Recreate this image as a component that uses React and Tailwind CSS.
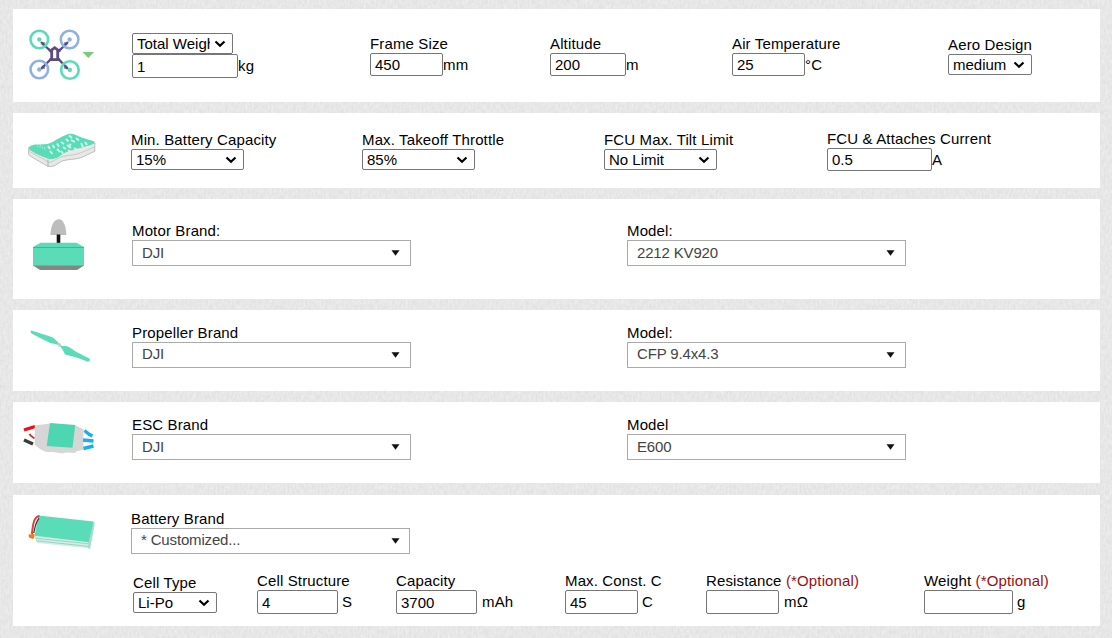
import React from "react";

const FONT = "font-['Liberation_Sans',Arial,sans-serif]";

function Texture() {
  return (
    <svg className="absolute inset-0 h-full w-full" aria-hidden="true">
      <filter id="weave-v" x="0" y="0" width="100%" height="100%">
        <feTurbulence type="fractalNoise" baseFrequency="0.5 0.2" numOctaves="2" seed="4" />
        <feColorMatrix values="0 0 0 0 0.93  0 0 0 0 0.93  0 0 0 0 0.93  1 0 0 0 -0.25" />
      </filter>
      <filter id="weave-h" x="0" y="0" width="100%" height="100%">
        <feTurbulence type="fractalNoise" baseFrequency="0.2 0.5" numOctaves="2" seed="9" />
        <feColorMatrix values="0 0 0 0 0.55  0 0 0 0 0.55  0 0 0 0 0.55  0.2 0 0 0 -0.07" />
      </filter>
      <rect width="100%" height="100%" filter="url(#weave-v)" />
      <rect width="100%" height="100%" filter="url(#weave-h)" />
    </svg>
  );
}

function Label({ children }) {
  return (
    <span className="block h-[17px] text-[15px] leading-[17px] tracking-[0.14px] whitespace-nowrap">{children}</span>
  );
}

function Text({ size, value, unit, gap = "" }) {
  return (
    <span className="flex items-center">
      <input
        aria-label="value"
        defaultValue={value}
        className={`${size} box-border rounded-[2px] border border-[#767676] bg-white px-1 text-[15px] leading-[17px] text-black outline-none`}
      />
      {unit && <span className={`${gap} text-[15px] leading-[17px] tracking-[0.14px]`}>{unit}</span>}
    </span>
  );
}

function Select({ size, value }) {
  return (
    <span className={`${size} flex h-[21px] items-center justify-between rounded-[2px] border border-[#767676] bg-white pr-[6px] pl-1`}>
      <span className="min-w-0 overflow-hidden text-[15px] leading-[18px] whitespace-nowrap">{value}</span>
      <svg width="12" height="8" viewBox="0 0 12 8" className="ml-1 shrink-0" fill="none">
        <path d="M1.5 1.5 6 5.7 10.5 1.5" stroke="#000" strokeWidth="2.2" />
      </svg>
    </span>
  );
}

function Combo({ value, lift = "pb-px", arrow = "pr-[10px]" }) {
  return (
    <span className={`${arrow} flex h-[26px] w-[279px] items-center justify-between border border-[#aaa] bg-white pl-[9px]`}>
      <span className={`${lift} text-[15px] leading-[17px] tracking-[-0.16px] whitespace-nowrap text-[#444]`}>{value}</span>
      <svg width="9" height="6" viewBox="0 0 9 6">
        <path d="M.5.3h8L4.5 5.8Z" fill="#111" />
      </svg>
    </span>
  );
}

function Field({ label, className = "", children }) {
  return (
    <div className={className}>
      <Label>{label}</Label>
      <div className="pt-px">{children}</div>
    </div>
  );
}

const Optional = () => <span className="text-[#990f0f]">(*Optional)</span>;

function Drone() {
  return (
    <svg width="68" height="54" viewBox="0 0 68 54" fill="none">
      <path d="M14 14 24.5 24M41 14 31 24M14 41 24.5 30.5M41 41 31 30.5" stroke="#5c4a80" strokeWidth="2.4" />
      <path d="m15 17 2.500-2.500M37.500 14.500 40 17M15 38l2.500 2.500M37.500 40.500 40 38" stroke="#5c4a80" strokeWidth="1.600" />
      <path d="M24.700 33V22l3-2.300 3 2.300v11M22.500 31.700H33" stroke="#5c4a80" strokeWidth="2.800" />
      <path d="M22.500 20.500v3M33 20.500v3" stroke="#5c4a80" strokeWidth="1.200" />
      <g strokeWidth="2.600">
        <circle cx="12.300" cy="11.500" r="8.800" stroke="#5bdcb8" />
        <circle cx="42.600" cy="11.500" r="8.800" stroke="#8eb1e5" />
        <circle cx="12.300" cy="41.500" r="8.800" stroke="#8eb1e5" />
        <circle cx="42.900" cy="42" r="8.800" stroke="#5bdcb8" />
      </g>
      <circle cx="12.300" cy="11.500" r="2.200" fill="#5bdcb8" />
      <circle cx="42.600" cy="11.500" r="2.200" fill="#8eb1e5" />
      <circle cx="12.300" cy="41.500" r="2.200" fill="#8eb1e5" />
      <circle cx="42.900" cy="42" r="2.200" fill="#5bdcb8" />
      <path d="M55.500 24H67l-5.700 6Z" fill="#78cc78" />
    </svg>
  );
}

function Controller() {
  return (
    <svg width="70" height="36" viewBox="0 0 70 36">
      <path d="M.7 15v6.500c1 2 13 8 18.500 11.500 2 .8 4 .7 6 .2 4-1.500 6-4.200 10-5.500 6-1.700 11-1 17-2.800 5-1.500 10-5 14.600-6.500V10l-46 14Z" fill="#e8e8e8" stroke="#b0b0b0" strokeWidth=".8" />
      <path d="M1 17.500C4 21 15 25 20 29c3 1 5-1 8-2.500 7-4.500 13-3.500 21-5.500 7-2 12-5 17.500-7" fill="none" stroke="#c4c4c4" strokeWidth=".9" />
      <path d="M20 26.500v6.800" stroke="#aaa" strokeWidth=".9" />
      <path d="M.8 15.800C0 13.500 3 12.800 6 11.800c3-.8 10 .2 15-1.300C28 8.200 33 2.500 42 .8c3-.5 5 1 8 2.200 5 2 10 3.500 16 5.200 2 1.300-2 3.300-4.500 4C55 14.500 45 16 38.700 18.700 33 21 31 26 22 26.200 17 25 3 19 .8 15.800Z" fill="#5bdcb8" />
      <g stroke="#d5faf0" strokeWidth="1.800">
        <path d="m20 13 2 3M24.500 12l2 3M29 10.500l2 3M22 18l2.500 3M29 16l3 3M33 18l2 2.500M33 9l3 2M38 6l2.500 2.500M41 2.500l3 2.500M35 14l3 2M39 12l4 3M43 11l-3 3M43 7l4 2M48 5l3 2.500M46 15l3 2M53 10l2 4M57 9l2 3M40 17l3 2" />
      </g>
      <path d="m9 13 8 3M12 12.500l7 3" stroke="#bdf5e6" strokeDasharray="1 1.500" />
    </svg>
  );
}

function Motor() {
  return (
    <svg width="52" height="52" viewBox="0 0 52 52">
      <path d="M17.300 16c.5-7 2.500-15.800 8.200-15.800S33 8 33.300 16Z" fill="#bdbdbd" />
      <path d="M23.700 15.500h3.600V25h-3.600Z" fill="#111" />
      <path d="M0 28 7.500 23.700h36L51 28v19H0Z" fill="#5bdcb8" />
      <path d="M0 28.500h51" stroke="#45b397" />
      <path d="M0 46.500h51L44 51H7Z" fill="#858585" />
    </svg>
  );
}

function Propeller() {
  return (
    <svg width="62" height="34" viewBox="0 0 62 34">
      <path d="M1.800.6C.3.500.2 2.500 1.300 3.200L10 8l10.500 5 8.500 2-.7-2.500-5-4.800C18 5.500 8 3 1.800.6Z" fill="#5bdcb8" />
      <path d="m29.500 15.500 7.500.8c3.500 1 6 3.700 9 5.500l13.300 6.700c1.500 1.200.3 3.300-1.500 3.200C50 28.500 43 26.300 35 24.500l-2.500-5Z" fill="#5bdcb8" />
      <circle cx="29.300" cy="14.800" r="1.900" fill="#c5d0cd" />
    </svg>
  );
}

function Esc() {
  return (
    <svg width="72" height="34" viewBox="0 0 72 34" fill="none">
      <path d="m1 7 11-3.500" stroke="#f40d0d" strokeWidth="3.400" />
      <path d="M6.500 11c1 2 3 3 5 4.500" stroke="#c53a3a" strokeWidth="2" />
      <path d="m1 17 9 4" stroke="#393939" strokeWidth="3.400" />
      <path d="M11.800 2.500 27 .5l25 1.800 8.500 4V27l-6.500 1-2 2-9-.5-4 1-9-1.500h-7l-5-2.300-6.200-5Z" fill="#d6d6d6" />
      <path d="M27 0l25.200 2-2.700 22.700L23.700 23Z" fill="#4cd6b1" />
      <g stroke="#16aef0" strokeWidth="3.400">
        <path d="M61.500 7.500c2.500 2 4 4 8 5.500M60 17l10.500 1M60.500 25.500l10-2.500" />
      </g>
    </svg>
  );
}

function Battery() {
  return (
    <svg width="68" height="35" viewBox="0 0 68 35">
      <path d="m6.500 20.500 54 6.500 1.500 6.500-53-5.500Z" fill="#d3eee6" />
      <path d="m60.500 27.500 4.500-21 1.800 2L62.200 33.600l-2-.2Z" fill="#a6dccb" />
      <path d="m7 23.200 54 5.600M8 25.700l53.500 5.800" stroke="#93cfbd" strokeWidth=".9" />
      <path d="M10.500.5 65.500 6.500l-4.700 20.700-54.300-6.500Z" fill="#5bdcb8" />
      <path d="M11.500 1C5 2 5 11 3.900 19" fill="none" stroke="#dc4242" strokeWidth="2" />
      <path d="M11 3.500C7.500 7 7 12 5.800 18" fill="none" stroke="#443333" strokeWidth="1.200" />
      <path d="m.5 19.500 5.800-.5.2 3-1.500 2-4-1.500Z" fill="#ef7a18" />
    </svg>
  );
}

export default function App() {
  return (
    <div className={`${FONT} relative h-[638px] w-[1112px] overflow-hidden bg-[#e3e3e3] text-black`}>
      <Texture />
      <main className="relative flex flex-col gap-[11px] pt-[9px] pl-[13px]">
        <section className="grid h-[93px] w-[1087px] grid-cols-[119px_238px_180px_182px_216px_1fr] bg-white">
          <div className="pt-[19px] pl-[14px]"><Drone /></div>
          <div className="pt-6">
            <Select size="w-[101px]" value="Total Weight" />
            <Text size="h-6 w-[106px]" value="1" unit="kg" gap="pb-px" />
          </div>
          <Field label="Frame Size" className="pt-[26px]"><Text size="h-[23px] w-[73px]" value="450" unit="mm" /></Field>
          <Field label="Altitude" className="pt-[26px]"><Text size="h-[23px] w-[76px]" value="200" unit="m" /></Field>
          <Field label="Air Temperature" className="pt-[26px]"><Text size="h-[23px] w-[73px]" value="25" unit="°C" /></Field>
          <Field label="Aero Design" className="pt-[27px]"><Select size="w-[84px]" value="medium" /></Field>
        </section>

        <section className="grid h-[75px] w-[1087px] grid-cols-[118px_231px_242px_223px_1fr] bg-white">
          <div className="pt-5 pl-[15px]"><Controller /></div>
          <Field label="Min. Battery Capacity" className="pt-[18px]"><Select size="w-[113px]" value="15%" /></Field>
          <Field label="Max. Takeoff Throttle" className="pt-[18px]"><Select size="w-[113px]" value="85%" /></Field>
          <Field label="FCU Max. Tilt Limit" className="pt-[18px]"><Select size="w-[113px]" value="No Limit" /></Field>
          <Field label="FCU &amp; Attaches Current" className="pt-[17px]"><Text size="h-[23px] w-[105px]" value="0.5" unit="A" /></Field>
        </section>

        <section className="grid h-[100px] w-[1087px] grid-cols-[119px_495px_1fr] bg-white">
          <div className="pt-5 pl-5"><Motor /></div>
          <Field label="Motor Brand:" className="pt-[23px]"><Combo value="DJI" /></Field>
          <Field label="Model:" className="pt-[23px]"><Combo value="2212 KV920" /></Field>
        </section>

        <section className="grid h-[81px] w-[1087px] grid-cols-[119px_495px_1fr] bg-white">
          <div className="pt-5 pl-[17px]"><Propeller /></div>
          <Field label="Propeller Brand" className="pt-[14px]"><Combo value="DJI" lift="pb-[3px]" /></Field>
          <Field label="Model:" className="pt-[14px]"><Combo value="CFP 9.4x4.3" lift="pb-[3px]" /></Field>
        </section>

        <section className="grid h-[81px] w-[1087px] grid-cols-[119px_495px_1fr] bg-white">
          <div className="pt-[21px] pl-[10px]"><Esc /></div>
          <Field label="ESC Brand" className="pt-[14px]"><Combo value="DJI" /></Field>
          <Field label="Model" className="pt-[14px]"><Combo value="E600" /></Field>
        </section>

        <section className="mt-px grid h-[131px] w-[1087px] grid-cols-[118px_1fr] bg-white">
          <div className="pt-5 pl-[15px]"><Battery /></div>
          <div>
            <Field label="Battery Brand" className="pt-[15px]"><Combo value="* Customized..." lift="pb-[3px]" arrow="pr-[9px]" /></Field>
            <div className="grid grid-cols-[124px_139px_169px_141px_218px_1fr] pt-[18px] pl-[2px]">
              <Field label="Cell Type" className="pt-[2px]"><Select size="w-[84px]" value="Li-Po" /></Field>
              <Field label="Cell Structure"><Text size="h-6 w-[81px]" value="4" unit="S" gap="pb-px pl-1" /></Field>
              <Field label="Capacity"><Text size="h-6 w-[81px]" value="3700" unit="mAh" gap="pb-px pl-[5px]" /></Field>
              <Field label="Max. Const. C"><Text size="h-6 w-[73px]" value="45" unit="C" gap="pb-px pl-1" /></Field>
              <Field label={<>Resistance <Optional /></>}><Text size="h-6 w-[73px]" value="" unit="mΩ" gap="pb-px pl-[5px]" /></Field>
              <Field label={<>Weight <Optional /></>}><Text size="h-6 w-[89px]" value="" unit="g" gap="pb-px pl-1" /></Field>
            </div>
          </div>
        </section>
      </main>
    </div>
  );
}
